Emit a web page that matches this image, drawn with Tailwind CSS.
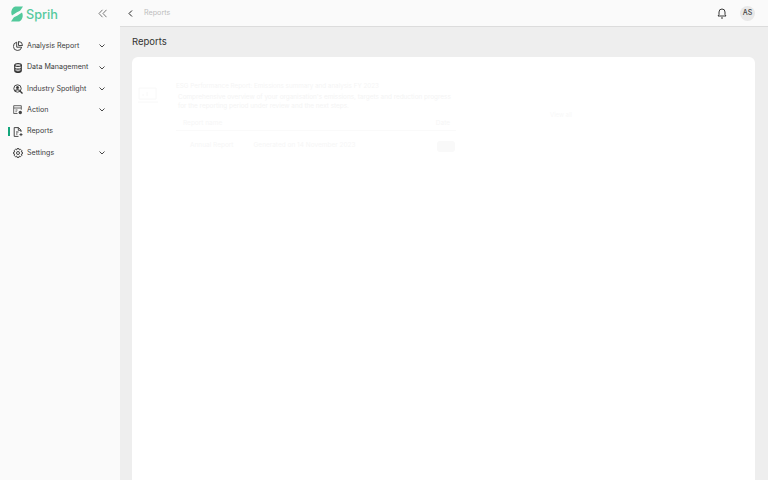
<!doctype html>
<html><head><meta charset="utf-8"><script src="https://cdn.jsdelivr.net/npm/@tailwindcss/browser@4"></script></head>
<body class="m-0 font-['Inter',sans-serif] antialiased">
<div class="flex h-[480px] w-[768px] overflow-hidden bg-[#eeeeee] text-[#333] opacity-[.999]">
  <aside class="flex h-full w-[120px] shrink-0 flex-col bg-[#fafafa]">
    <div class="flex h-[35.5px] items-start pl-[11px] pr-[13px] pt-[6px]">
      <svg class="h-[16px] w-[12px] shrink-0" viewBox="0 0 12 16"><path fill="#52c99b" d="M4.500.5H12L9.500 4.200C8.500 5.500 6.500 5.500 5.500 6.500L1 9.500C-1 6 1.500.5 4.500.5Z"/><path fill="#52c99b" d="M11 6.500C13 10 10.500 15.500 7.500 15.500H0L2.500 11.800C3.500 10.500 5.500 10.500 6.500 9.500Z"/></svg>
      <span class="ml-[3px] mt-[1px] text-[12.7px] leading-[16px] font-medium text-[#55c99d]">Sprih</span>
      <svg class="ml-auto mt-[3px] h-[9px] w-[9px]" viewBox="0 0 9 9" fill="none" stroke="#777" stroke-width="1"><path d="M4.500 .8 1 4.500l3.500 3.700M8.500 .8 5 4.500l3.500 3.700"/></svg>
    </div>
    <nav class="flex flex-col">
      <div class="relative flex h-[21.4px] items-center pl-[13px] pr-[15px]">
        <svg class="h-[10px] w-[10px] shrink-0" viewBox="0 0 10 10" fill="none" stroke="#333" stroke-width=".9"><path d="M3.700 1.200a4.200 4.200 0 1 0 5 5H3.700ZM5.500.5v4h4A4 4 0 0 0 5.500.5Z"/></svg>
        <span class="ml-[4px] text-[7.1px] text-[#3a3a3a]">Analysis Report</span>
        <svg class="ml-auto h-[6px] w-[6px]" viewBox="0 0 6 6" fill="none" stroke="#333" stroke-width=".9"><path d="M.5 1.500 3 4l2.500-2.500"/></svg>
      </div>
      <div class="relative flex h-[21.4px] items-center pl-[13px] pr-[15px]">
        <svg class="h-[10px] w-[10px] shrink-0" viewBox="0 0 10 10" fill="none" stroke="#333" stroke-width="1.100"><ellipse cx="5" cy="2" rx="3.300" ry="1.400"/><path d="M1.700 2v6c0 .9 1.400 1.500 3.300 1.500S8.300 8.900 8.300 8V2M1.700 4.700c0 .9 1.400 1.400 3.300 1.400s3.300-.5 3.300-1.400M1.700 7c0 .9 1.400 1.300 3.300 1.300S8.300 7.900 8.300 7"/></svg>
        <span class="ml-[4px] text-[7.1px] text-[#3a3a3a]">Data Management</span>
        <svg class="ml-auto h-[6px] w-[6px]" viewBox="0 0 6 6" fill="none" stroke="#333" stroke-width=".9"><path d="M.5 1.500 3 4l2.500-2.500"/></svg>
      </div>
      <div class="relative flex h-[21.4px] items-center pl-[13px] pr-[15px]">
        <svg class="h-[10px] w-[10px] shrink-0" viewBox="0 0 10 10" fill="none" stroke="#333" stroke-width=".9"><circle cx="4.500" cy="4.500" r="3.700"/><path d="m7.200 7.200 2.300 2.300" stroke-width="1.300"/><circle cx="4.500" cy="3.600" r="1.100" fill="#333"/><path d="M2.400 6.800c.4-1.400 3.800-1.400 4.200 0" stroke-width="1.100"/></svg>
        <span class="ml-[4px] text-[7.1px] text-[#3a3a3a]">Industry Spotlight</span>
        <svg class="ml-auto h-[6px] w-[6px]" viewBox="0 0 6 6" fill="none" stroke="#333" stroke-width=".9"><path d="M.5 1.500 3 4l2.500-2.500"/></svg>
      </div>
      <div class="relative flex h-[21.4px] items-center pl-[13px] pr-[15px]">
        <svg class="h-[10px] w-[10px] shrink-0" viewBox="0 0 10 10" fill="none" stroke="#555" stroke-width=".9"><path d="M4.500 8.500H.7V.7h7.600v4M.7 3h7.600M2.500 5h2M2.500 6.700h1.200"/><circle cx="7.300" cy="7.500" r="1.700" fill="#444" stroke="none"/></svg>
        <span class="ml-[4px] text-[7.1px] text-[#3a3a3a]">Action</span>
        <svg class="ml-auto h-[6px] w-[6px]" viewBox="0 0 6 6" fill="none" stroke="#333" stroke-width=".9"><path d="M.5 1.500 3 4l2.500-2.500"/></svg>
      </div>
      <div class="relative flex h-[21.4px] items-center pl-[13px] pr-[15px]">
        <span class="absolute left-[8px] top-[6px] h-[9px] w-[2px] bg-[#13a67c]"></span>
        <svg class="h-[10px] w-[10px] shrink-0" viewBox="0 0 10 10" fill="none" stroke="#333" stroke-width=".9"><path d="M5.500 9.400H1.200V.6h4.300l2.500 2.500v1.900M5.300.6v2.700H8M3 5h2.500M3 7h1.500"/><path d="M6.500 7.600h3M8 6.100v3"/></svg>
        <span class="ml-[4px] text-[7.1px] text-[#3a3a3a]">Reports</span>
      </div>
      <div class="relative flex h-[21.4px] items-center pl-[13px] pr-[15px]">
        <svg class="h-[10px] w-[10px] shrink-0" viewBox="0 0 10 10" fill="none" stroke="#333" stroke-width=".9"><circle cx="5" cy="5" r="1.500"/><path d="M4 .6h2l.3 1.300 1.200-.6 1.400 1.400-.7 1.200 1.300.3v1.600l-1.300.3.700 1.200-1.400 1.400-1.200-.6-.3 1.300H4l-.3-1.300-1.200.6-1.400-1.400.7-1.200L.5 5.800V4.200l1.300-.3-.7-1.200 1.400-1.400 1.200.6Z"/></svg>
        <span class="ml-[4px] text-[7.1px] text-[#3a3a3a]">Settings</span>
        <svg class="ml-auto h-[6px] w-[6px]" viewBox="0 0 6 6" fill="none" stroke="#333" stroke-width=".9"><path d="M.5 1.500 3 4l2.500-2.500"/></svg>
      </div>
    </nav>
  </aside>
  <div class="flex min-w-0 flex-1 flex-col">
    <header class="flex h-[27px] shrink-0 items-center border-b border-[#dcdcdc] bg-[#fafafa] pl-[8px] pr-[13px] pt-[1px]">
      <svg class="h-[7px] w-[5px]" viewBox="0 0 5 7" fill="none" stroke="#222" stroke-width="1"><path d="M4 .5 1 3.500l3 3"/></svg>
      <span class="ml-[11px] text-[7.2px] text-[#bdbdbd]">Reports</span>
      <svg class="ml-auto h-[11px] w-[10px] translate-x-px" viewBox="0 0 10 11" fill="none" stroke="#222" stroke-width=".9"><path d="M1 8h8L8 6.500V4a3 3 0 0 0-6 0v2.500ZM4 10h2"/></svg>
      <span class="ml-[14px] flex h-[15px] w-[15px] items-center justify-center rounded-full bg-[#e8e8e8] text-[7px] font-medium text-[#444]">AS</span>
    </header>
    <div class="flex h-[30px] shrink-0 items-center pl-[12px] text-[9.5px] text-[#333]">Reports</div>
    <main class="relative ml-[12px] mr-[13px] flex-1 rounded-t-[6px] bg-white">
      <span class="absolute left-[418px] top-[53px] text-[6px] text-[#f8f8f8]">View all</span>
      <div class="flex pl-[6px] pt-[24px]">
        <svg class="mt-[6px] h-[16px] w-[20px] shrink-0" viewBox="0 0 20 16" fill="none" stroke="#f8f8f8"><path d="M1 1h17v11H1ZM0 15h20M5 9V7M9 9V5"/></svg>
        <div class="ml-[18px] w-[280px] min-w-0">
          <p class="whitespace-nowrap text-[6.300px] leading-[11px] text-[#f5f5f5]">ESG Performance Report: Emissions summary and analysis FY 2023</p>
          <p class="mt-[1px] ml-[2px] whitespace-nowrap text-[6.400px] leading-[9px] text-[#f4f4f4]">Comprehensive overview of your organisation's emissions, targets and reduction progress</p>
          <p class="ml-[2px] whitespace-nowrap text-[6.400px] leading-[9px] text-[#f4f4f4]">for the reporting period under review and the next steps.</p>
          <div class="mt-[8px] flex border-b border-[#fafafa] pb-[1px] pl-[7px] pr-[6px] text-[6.500px] text-[#f6f6f6]"><span>Report name</span><span class="ml-auto">Date</span></div>
          <div class="mt-[10px] flex items-center pl-[14px] pr-[1px] text-[6.500px] text-[#f6f6f6]"><span>Annual Report</span><span class="ml-[20px]">Generated on 14 November 2023</span><span class="ml-auto h-[11px] w-[18px] rounded-[3px] bg-[#f9f9f9]"></span></div>
        </div>
      </div>
    </main>
  </div>
</div>
</body></html>
